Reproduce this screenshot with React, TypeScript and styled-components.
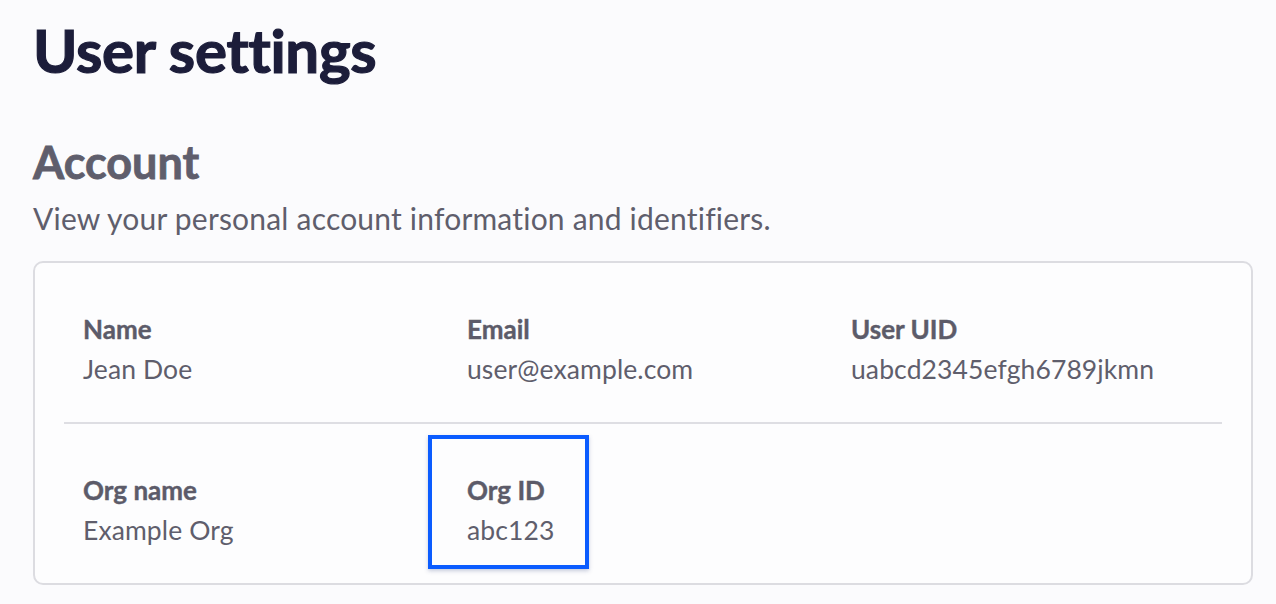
import React from "react";
import styled, { createGlobalStyle } from "styled-components";

const Global = createGlobalStyle`
  html, body { margin: 0; padding: 0; background: #fbfbfd; }
  body { font-family: Lato, "Open Sans", sans-serif; }
`;

const Page = styled.main`
  padding: 14px 23px 0 33px;
  box-sizing: border-box;
  width: 1276px;
`;

const Title = styled.h1`
  margin: 0;
  font-size: 60px;
  line-height: 72px;
  font-weight: 700;
  letter-spacing: -0.3px;
  -webkit-text-stroke: 1.2px #1c1d3a;
  color: #1c1d3a;
`;

const SectionTitle = styled.h2`
  margin: 48px 0 0;
  font-size: 45px;
  line-height: 56px;
  font-weight: 700;
  -webkit-text-stroke: 0.8px #5f5e6c;
  color: #5f5e6c;
`;

const Description = styled.p`
  margin: 8px 0 0;
  font-size: 30px;
  line-height: 40px;
  letter-spacing: 0.2px;
  color: #5f5e6c;
`;

const Card = styled.section`
  margin-top: 23px;
  border: 2px solid #dcdce1;
  border-radius: 10px;
  background: #fdfdfe;
  padding: 0 29px;
`;

const Row = styled.div<{ $divider?: boolean }>`
  display: grid;
  grid-template-columns: 384px 384px 1fr;
  padding: 47px 0 33px;
  border-bottom: ${(p) => (p.$divider ? "2px solid #dedee3" : "none")};
`;

const Cell = styled.div`
  padding-left: 19px;
`;

const Field = styled.div<{ $highlight?: boolean }>`
  position: relative;
  &::after {
    content: "";
    display: ${(p) => (p.$highlight ? "block" : "none")};
    position: absolute;
    left: -39px;
    top: -36px;
    width: 161px;
    height: 134px;
    box-sizing: border-box;
    border: 4px solid #0b5cff;
    box-shadow: 0 2px 4px rgba(40, 60, 120, 0.25);
    pointer-events: none;
  }
`;

const Label = styled.div`
  font-size: 26px;
  line-height: 39px;
  font-weight: 700;
  -webkit-text-stroke: 0.4px #5c5b69;
  color: #5c5b69;
`;

const Value = styled.div`
  font-size: 26.5px;
  line-height: 40px;
  letter-spacing: 0.1px;
  color: #5f5e6c;
`;

type Item = { label: string; value: string; highlight?: boolean };

const rows: Item[][] = [
  [
    { label: "Name", value: "Jean Doe" },
    { label: "Email", value: "user@example.com" },
    { label: "User UID", value: "uabcd2345efgh6789jkmn" },
  ],
  [
    { label: "Org name", value: "Example Org" },
    { label: "Org ID", value: "abc123", highlight: true },
  ],
];

export default function App() {
  return (
    <>
      <Global />
      <Page>
        <Title>User settings</Title>
        <SectionTitle>Account</SectionTitle>
        <Description>View your personal account information and identifiers.</Description>
        <Card>
          {rows.map((row, i) => (
            <Row key={i} $divider={i === 0}>
              {row.map((item) => (
                <Cell key={item.label}>
                  <Field $highlight={item.highlight}>
                    <Label>{item.label}</Label>
                    <Value>{item.value}</Value>
                  </Field>
                </Cell>
              ))}
            </Row>
          ))}
        </Card>
      </Page>
    </>
  );
}
